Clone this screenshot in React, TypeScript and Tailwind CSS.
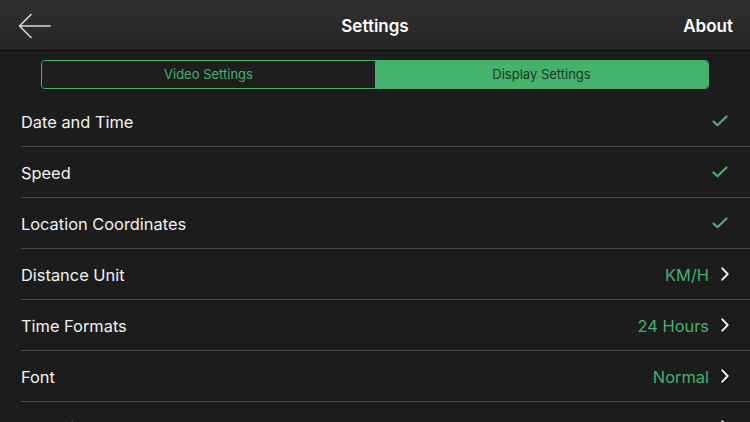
import React from "react";

const Check = () => (
  <svg width="16" height="12" viewBox="0 0 16 12" fill="none">
    <path d="M1.5 6.5 L5.5 10.2 L14.5 1.5" stroke="#45b26b" strokeWidth="2.2" strokeLinecap="round" strokeLinejoin="round" />
  </svg>
);

const Chevron = () => (
  <svg width="8" height="14" viewBox="0 0 8 14" fill="none">
    <path d="M1.3 1.3 L6.7 7 L1.3 12.7" stroke="#f0f0f0" strokeWidth="1.9" strokeLinecap="round" strokeLinejoin="round" />
  </svg>
);

type Row = { label: string; check?: boolean; value?: string };

const rows: Row[] = [
  { label: "Date and Time", check: true },
  { label: "Speed", check: true },
  { label: "Location Coordinates", check: true },
  { label: "Distance Unit", value: "KM/H" },
  { label: "Time Formats", value: "24 Hours" },
  { label: "Font", value: "Normal" },
  { label: "Font Size", value: "2" },
];

export default function App() {
  return (
    <div
      className="w-[750px] h-[422px] overflow-hidden bg-[#1c1c1c] text-white"
      style={{ fontFamily: "Inter, 'Liberation Sans', sans-serif" }}
    >
      <div className="h-[51px] bg-gradient-to-b from-[#2f2f2f] to-[#262626] border-b border-[#0e0e0e] flex items-center justify-between pt-[4px] pl-[17px] pr-[17px] relative">
        <svg width="34" height="28" viewBox="0 0 34 28" fill="none">
          <path d="M33 13 H2.5 M14 1.5 L2.5 13 L14 24.5" stroke="#d8d8d8" strokeWidth="1.6" strokeLinecap="round" strokeLinejoin="round" />
        </svg>
        <div className="absolute left-0 right-0 top-[4px] bottom-0 flex items-center justify-center text-[17px] font-semibold pointer-events-none">Settings</div>
        <div className="text-[17px] font-semibold">About</div>
      </div>
      <div className="pt-[9px] px-[41px]">
        <div className="flex h-[29px] border border-[#45b26b] rounded-[4px] overflow-hidden">
          <div className="flex-1 flex items-center justify-center text-[13px] text-[#45b26b] bg-[#1e1e1e]">Video Settings</div>
          <div className="flex-1 flex items-center justify-center text-[13px] text-[#1a3a25] bg-[#45b26b]">Display Settings</div>
        </div>
      </div>
      <div className="mt-[7px] pl-[21px]">
        {rows.map((r) => (
          <div key={r.label} className="h-[51px] border-b border-[#4a4a4a] flex items-center justify-between pt-[3px] pr-[21px]">
            <span className="text-[16.4px] text-[#f2f2f2]">{r.label}</span>
            {r.check ? (
              <span className="mr-[1px] -mt-[3px]"><Check /></span>
            ) : (
              <span className="flex items-center gap-[12px]">
                <span className="text-[16.4px] text-[#45b26b]">{r.value}</span>
                <span className="-mt-[3px]"><Chevron /></span>
              </span>
            )}
          </div>
        ))}
      </div>
    </div>
  );
}
